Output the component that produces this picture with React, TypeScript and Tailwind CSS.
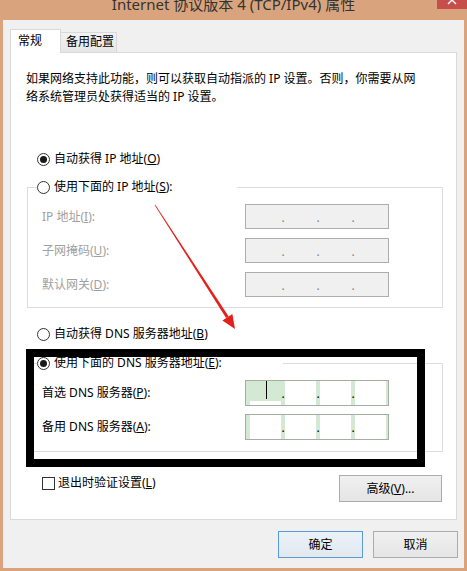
import React from "react";

function Radio({ checked, children }: { checked?: boolean; children: React.ReactNode }) {
  return (
    <div className="flex items-center h-[20px]">
      <div className="w-[13px] h-[13px] rounded-full border border-[#333333] bg-white flex items-center justify-center shrink-0">
        {checked && <div className="w-[7px] h-[7px] rounded-full bg-[#1a1a1a]" />}
      </div>
      <span className="ml-[4px] whitespace-nowrap leading-[16px]">{children}</span>
    </div>
  );
}

function Sep({ color }: { color: string }) {
  return (
    <div className={`w-[4px] flex items-center justify-center leading-none text-[12px] ${color}`}>
      <span className="mt-[2px]">.</span>
    </div>
  );
}

function DisabledIp() {
  return (
    <div className="w-[144px] h-[25px] border border-[#adadad] bg-[#f0f0f0] flex pl-[4px]">
      <div className="w-[31px]" />
      <Sep color="text-[#808080]" />
      <div className="w-[31px]" />
      <Sep color="text-[#808080]" />
      <div className="w-[31px]" />
      <Sep color="text-[#808080]" />
      <div className="w-[31px]" />
    </div>
  );
}

function DnsIp({ focused }: { focused?: boolean }) {
  return (
    <div className="w-[144px] h-[26px] border border-[#a3ada3] bg-[#d3e9d3] flex pl-[4px]">
      {focused ? (
        <div className="w-[31px] flex flex-col">
          <div className="h-[20px] bg-[#d3e9d3]">
            <div className="ml-[16px] w-px h-[18px] bg-black" />
          </div>
          <div className="h-[4px] bg-white" />
        </div>
      ) : (
        <div className="w-[31px] bg-white" />
      )}
      <Sep color="text-black" />
      <div className="w-[31px] bg-white" />
      <Sep color="text-black" />
      <div className="w-[31px] bg-white" />
      <Sep color="text-black" />
      <div className="w-[31px] bg-white" />
    </div>
  );
}

export default function App() {
  return (
    <div className="relative w-[467px] h-[571px] overflow-hidden bg-[#d9a47d] font-['Noto_Sans','Noto_Sans_CJK_SC',sans-serif] text-[12px] text-black">
      {/* Title bar */}
      <div className="relative h-[20px] overflow-hidden">
        <div className="-mt-[3px] text-center text-[15px] leading-[15px] text-[#333333] whitespace-nowrap">
          Internet 协议版本 4 (TCP/IPv4) 属性
        </div>
        <div className="absolute top-0 right-0 w-[30px] h-[9px] bg-[#c74e4a]">
          <svg width="30" height="9" viewBox="0 0 30 9">
            <path d="M11 4 L15 0 L19 4" stroke="white" strokeWidth="1.4" fill="none" />
          </svg>
        </div>
      </div>

      {/* Body */}
      <div className="ml-[3px] w-[461px] h-[548px] bg-[#f0f0f0] pt-[9px] pl-[7px] pr-[6px] flex flex-col">
        {/* Tabs */}
        <div className="flex items-end h-[23px]">
          <div className="relative z-10 -mb-px w-[51px] h-[24px] bg-white border border-b-0 border-[#d9d9d9] pl-[7px] pt-[3px] leading-[16px]">
            常规
          </div>
          <div className="w-[56px] h-[20px] border border-l-0 border-b-0 border-[#d9d9d9] bg-gradient-to-b from-[#f2f2f2] to-[#e6e6e6] pl-[5px] pt-[1px] leading-[16px]">
            备用配置
          </div>
        </div>

        {/* Panel */}
        <div className="w-[447px] h-[468px] shrink-0 bg-white border border-[#d9d9d9] flex flex-col">
          <p className="mt-[17px] ml-[15px] leading-[18px] whitespace-nowrap">
            如果网络支持此功能，则可以获取自动指派的 IP 设置。否则，你需要从网
            <br />
            络系统管理员处获得适当的 IP 设置。
          </p>

          <div className="mt-[43px] ml-[26px]">
            <Radio checked>
              自动获得 IP 地址(<u>O</u>)
            </Radio>
          </div>

          {/* Group 1 */}
          <div className="mt-[18px] ml-[16px] w-[416px] border border-[#dcdcdc] pb-[10px]">
            <div className="-mt-[11px] ml-[9px] w-[200px] bg-white">
              <Radio>
                使用下面的 IP 地址(<u>S</u>):
              </Radio>
            </div>
            <div className="mt-[7px] flex flex-col gap-[9px] text-[#a0a0a0]">
              <div className="flex items-center pl-[14px]">
                <div className="w-[203px] leading-[16px]">
                  IP 地址(<u>I</u>):
                </div>
                <DisabledIp />
              </div>
              <div className="flex items-center pl-[14px]">
                <div className="w-[203px] leading-[16px]">
                  子网掩码(<u>U</u>):
                </div>
                <DisabledIp />
              </div>
              <div className="flex items-center pl-[14px]">
                <div className="w-[203px] leading-[16px]">
                  默认网关(<u>D</u>):
                </div>
                <DisabledIp />
              </div>
            </div>
          </div>

          <div className="mt-[16px] ml-[26px]">
            <Radio>
              自动获得 DNS 服务器地址(<u>B</u>)
            </Radio>
          </div>

          {/* Group 2 */}
          <div className="mt-[19px] ml-[16px] w-[416px] border border-[#dcdcdc] pb-[11px]">
            <div className="-mt-[11px] ml-[9px] w-[246px] bg-white">
              <Radio checked>
                使用下面的 DNS 服务器地址(<u>E</u>):
              </Radio>
            </div>
            <div className="mt-[7px] flex flex-col gap-[8px]">
              <div className="flex items-center pl-[14px]">
                <div className="w-[203px] leading-[16px]">
                  首选 DNS 服务器(<u>P</u>):
                </div>
                <DnsIp focused />
              </div>
              <div className="flex items-center pl-[14px]">
                <div className="w-[203px] leading-[16px]">
                  备用 DNS 服务器(<u>A</u>):
                </div>
                <DnsIp />
              </div>
            </div>
          </div>

          {/* Bottom row in panel */}
          <div className="mt-[23px] flex items-start">
            <div className="ml-[31px] h-[16px] flex items-center">
              <div className="w-[13px] h-[13px] border border-[#333333] bg-white" />
              <span className="ml-[3px] leading-[16px]">
                退出时验证设置(<u>L</u>)
              </span>
            </div>
            <div className="ml-auto mr-[14px] w-[103px] h-[27px] border border-[#acacac] bg-gradient-to-b from-[#f0f0f0] to-[#e5e5e5] flex items-center justify-center">
              高级(<u>V</u>)...
            </div>
          </div>
        </div>

        {/* Dialog buttons */}
        <div className="mt-[11px] flex justify-end gap-[10px]">
          <div className="w-[85px] h-[27px] border border-[#5b9bd5] bg-gradient-to-b from-[#eaf2fa] to-[#e2e8ee] flex items-center justify-center">
            确定
          </div>
          <div className="w-[85px] h-[27px] border border-[#acacac] bg-gradient-to-b from-[#f0f0f0] to-[#e5e5e5] flex items-center justify-center">
            取消
          </div>
        </div>
      </div>

      {/* Annotation: black rectangle */}
      <div className="absolute left-[26px] top-[349px] w-[399px] h-[118px] border-[8px] border-black pointer-events-none" />

      {/* Annotation: red arrow */}
      <svg className="absolute left-0 top-0 pointer-events-none" width="467" height="571" viewBox="0 0 467 571">
        <polygon
          points="154.7,205.2 155.3,204.8 228.7,316.4 226.1,318.0"
          fill="#e3201b"
        />
        <polygon points="235,329 222.4,320.5 232.4,313.9" fill="#e3201b" />
      </svg>
    </div>
  );
}
